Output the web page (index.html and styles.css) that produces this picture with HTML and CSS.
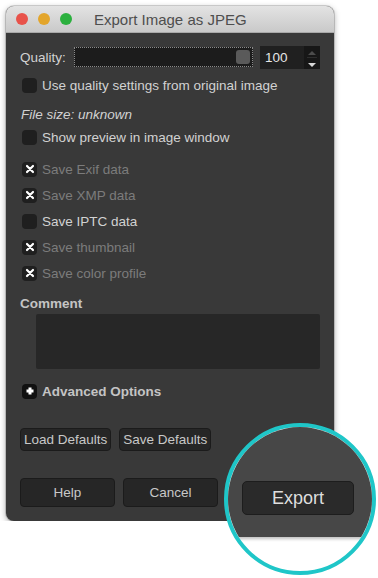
FILE: index.html
```html
<!DOCTYPE html>
<html lang="en">
<head>
    <meta charset="UTF-8">
    <meta name="viewport" content="width=device-width, initial-scale=1.0">
    <title>Export Image as JPEG</title>
    <link rel="stylesheet" href="styles.css">
</head>
<body>
    <div class="window">
        <div class="titlebar">
            <span class="light red"></span>
            <span class="light yellow"></span>
            <span class="light green"></span>
            <span class="title">Export Image as JPEG</span>
        </div>

        <div class="content">
            <div class="quality-row">
                <span class="label">Quality:</span>
                <div class="slider"><span class="handle"></span></div>
                <div class="spin">
                    <span class="spin-value">100</span>
                    <span class="spin-arrows">
                        <svg class="arrow up" width="10" height="6" viewBox="0 0 10 6"><path d="M1 5 L5 1 L9 5 Z" fill="#4c4c4c"/></svg>
                        <svg class="arrow" width="10" height="6" viewBox="0 0 10 6"><path d="M1 1 L9 1 L5 5 Z" fill="#d8d8d8"/></svg>
                    </span>
                </div>
            </div>

            <label class="check-row first">
                <span class="box"></span>
                Use quality settings from original image
            </label>

            <div class="file-size">File size: unknown</div>

            <label class="check-row">
                <span class="box"></span>
                Show preview in image window
            </label>

            <div class="meta-list">
                <label class="check-row tall disabled">
                    <span class="box"><svg width="10" height="10" viewBox="0 0 10 10"><path d="M2 2 L8 8 M8 2 L2 8" stroke="#fff" stroke-width="2.2" stroke-linecap="round"/></svg></span>
                    Save Exif data
                </label>
                <label class="check-row tall disabled">
                    <span class="box"><svg width="10" height="10" viewBox="0 0 10 10"><path d="M2 2 L8 8 M8 2 L2 8" stroke="#fff" stroke-width="2.2" stroke-linecap="round"/></svg></span>
                    Save XMP data
                </label>
                <label class="check-row tall">
                    <span class="box"></span>
                    Save IPTC data
                </label>
                <label class="check-row tall disabled">
                    <span class="box"><svg width="10" height="10" viewBox="0 0 10 10"><path d="M2 2 L8 8 M8 2 L2 8" stroke="#fff" stroke-width="2.2" stroke-linecap="round"/></svg></span>
                    Save thumbnail
                </label>
                <label class="check-row tall disabled">
                    <span class="box"><svg width="10" height="10" viewBox="0 0 10 10"><path d="M2 2 L8 8 M8 2 L2 8" stroke="#fff" stroke-width="2.2" stroke-linecap="round"/></svg></span>
                    Save color profile
                </label>
            </div>

            <div class="section-label">Comment</div>
            <div class="comment"></div>

            <div class="expander">
                <span class="box"><svg width="10" height="10" viewBox="0 0 10 10"><path d="M5 1.5 V8.5 M1.5 5 H8.5" stroke="#fff" stroke-width="3"/></svg></span>
                Advanced Options
            </div>

            <div class="defaults-row">
                <button class="btn small">Load Defaults</button>
                <button class="btn small">Save Defaults</button>
            </div>

            <div class="actions-row">
                <button class="btn">Help</button>
                <button class="btn">Cancel</button>
            </div>
        </div>
    </div>

    <!-- zoomed-in callout over the export button -->
    <div class="magnifier">
        <div class="magnified-window">
            <button class="btn big">Export</button>
        </div>
    </div>
</body>
</html>
```

FILE: styles.css
```css
body {
    margin: 0;
    background: #fff;
    font-family: "Liberation Sans", Arial, sans-serif;
    font-size: 13.5px;
    color: #d2d2d2;
}
.window {
    margin: 6px 0 0 6px;
    width: 328px;
    background: #393939;
    border-radius: 8px;
    overflow: hidden;
    box-shadow: 0 2px 6px rgba(0,0,0,0.35), 0 0 0 1px rgba(0,0,0,0.15);
}
.titlebar {
    height: 26px;
    display: flex;
    align-items: center;
    padding-left: 10px;
    background: linear-gradient(#e3e3e3, #c9c9c9);
    border-bottom: 1px solid #a9a9a9;
}
.light {
    width: 12px;
    height: 12px;
    border-radius: 50%;
    margin-right: 10px;
}
.red { background: #e8524a; }
.yellow { background: #e3a52b; }
.green { background: #2bb03e; }
.title {
    margin-left: 12px;
    font-size: 15px;
    color: #4e4e4e;
}
.content {
    padding: 12px 14px 14px 14px;
}
.quality-row {
    height: 24px;
    display: flex;
    align-items: center;
}
.label {
    width: 54px;
}
.slider {
    width: 179px;
    height: 20px;
    box-sizing: border-box;
    background: #1c1c1c;
    border: 1px dotted #8a8a8a;
    display: flex;
    align-items: center;
    justify-content: flex-end;
    padding-right: 2px;
}
.handle {
    width: 14px;
    height: 14px;
    background: #5a5a5a;
    border-radius: 3px;
}
.spin {
    margin-left: 7px;
    width: 60px;
    height: 23px;
    background: #202020;
    display: flex;
    align-items: center;
}
.spin-value {
    flex: 1;
    padding-left: 5px;
    color: #e6e6e6;
}
.spin-arrows {
    width: 16px;
    height: 23px;
    display: flex;
    flex-direction: column;
    background: #171717;
}
.arrow {
    flex: 1;
    display: block;
    margin: 0 auto;
    padding-top: 3px;
}
.arrow.up {
    border-bottom: 1px solid #2e2e2e;
}
.check-row {
    height: 22px;
    display: flex;
    align-items: center;
    padding-left: 2px;
}
.check-row.first {
    margin-top: 5px;
}
.check-row.tall {
    height: 26px;
}
.check-row.disabled {
    color: #7c7c7c;
}
.box {
    width: 15px;
    height: 15px;
    border-radius: 4px;
    background: #1f1f1f;
    margin-right: 5px;
    display: flex;
    align-items: center;
    justify-content: center;
}
.file-size {
    height: 22px;
    line-height: 22px;
    margin-top: 8px;
    padding-left: 1px;
    font-style: italic;
}
.meta-list {
    margin-top: 8px;
}
.section-label {
    margin-top: 8px;
    height: 20px;
    line-height: 20px;
    font-weight: bold;
    color: #c4c4c4;
}
.comment {
    margin-left: 16px;
    height: 55px;
    background: #272727;
    border-radius: 2px;
}
.expander {
    margin-top: 12px;
    height: 20px;
    display: flex;
    align-items: center;
    padding-left: 2px;
    font-weight: bold;
    color: #c4c4c4;
}
.expander .box {
    background: #111;
}
.defaults-row {
    margin-top: 27px;
    display: flex;
    gap: 8px;
}
.btn {
    font-family: inherit;
    font-size: 13.5px;
    color: #c8c8c8;
    background: #262626;
    border: 1px solid #1b1b1b;
    border-radius: 4px;
    height: 29px;
    width: 95px;
    padding: 0;
}
.btn.small {
    height: 23px;
    width: auto;
    padding: 0 3px;
}
.actions-row {
    margin-top: 27px;
    display: flex;
    gap: 8px;
}
.magnifier {
    position: absolute;
    left: 224px;
    top: 423px;
    width: 144px;
    height: 144px;
    border: 4px solid #1fc6c8;
    border-radius: 50%;
    overflow: hidden;
    background: #fff;
}
.magnified-window {
    height: 110px;
    background: #474747;
    box-shadow: 0 2px 3px rgba(0,0,0,0.25);
    padding: 54px 0 0 14px;
    box-sizing: border-box;
}
.btn.big {
    width: 112px;
    height: 34px;
    font-size: 18px;
    color: #dedede;
    background: #2a2a2a;
    border-radius: 5px;
    border-color: #1d1d1d;
}
```
